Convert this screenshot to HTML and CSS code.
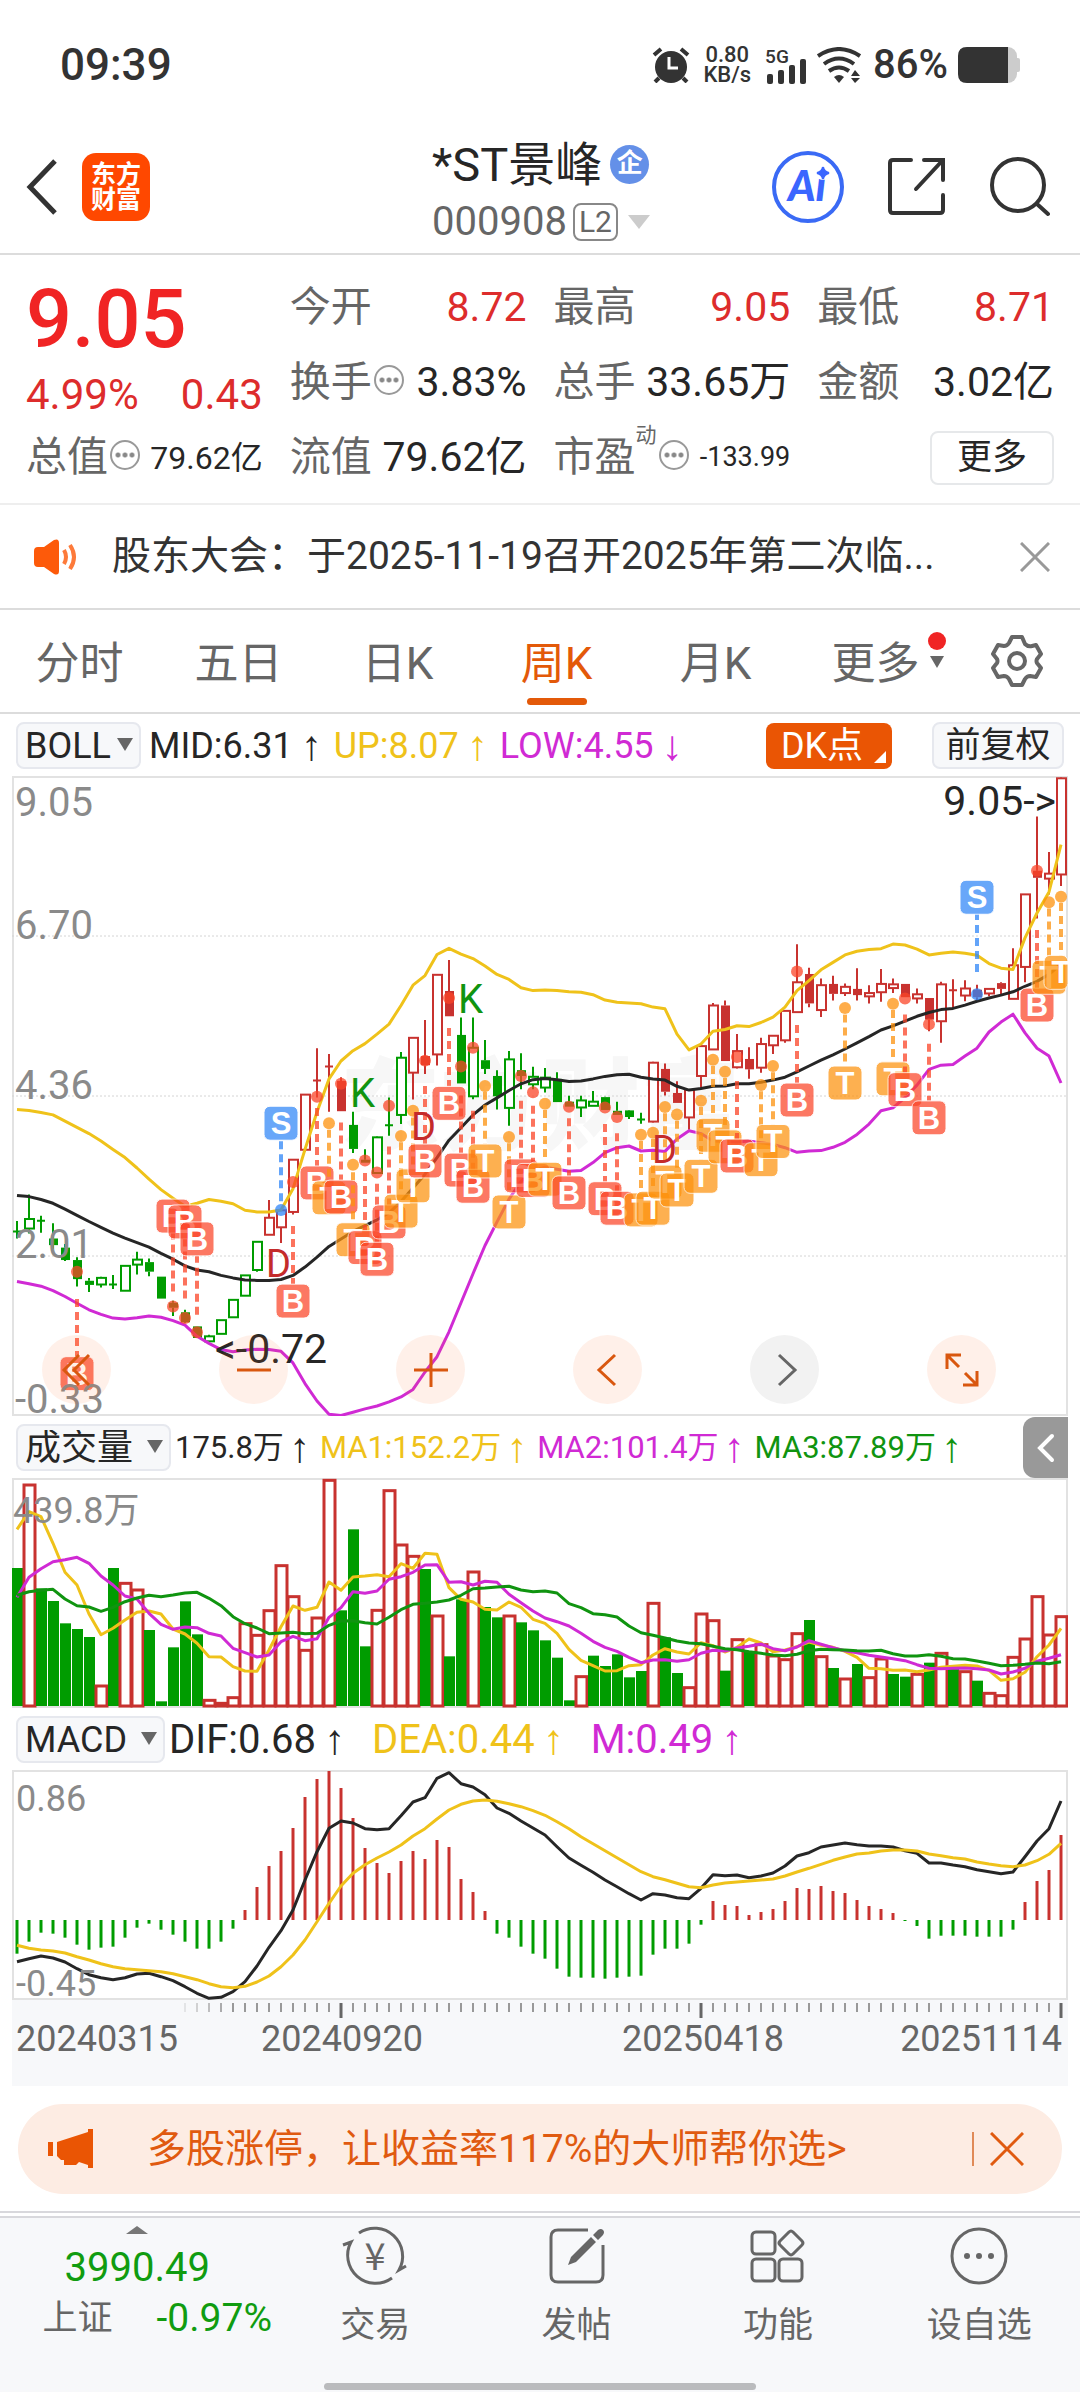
FILE: index.html
```html
<!DOCTYPE html>
<html lang="zh-CN">
<head>
    <meta charset="UTF-8">
    <meta name="viewport" content="width=device-width, initial-scale=1.0">
    <title>*ST景峰 000908</title>
    <link rel="stylesheet" href="styles.css">
</head>
<body>

    <div class="status">
        <span class="clock">09:39</span>
        <svg class="alarm" viewBox="0 0 38 36" width="38" height="36">
            <circle cx="19" cy="20" r="16" fill="#333"/>
            <path d="M2 8 L9 2 M36 8 L29 2 M7 31 L3 35 M31 31 L35 35" stroke="#333" stroke-width="4" fill="none"/>
            <path d="M17 10 V21 H26" stroke="#fff" stroke-width="3" fill="none"/>
        </svg>
        <span class="speed">0.80<br>KB/s</span>
        <span class="signal">
            <span>5G</span>
            <svg viewBox="0 0 42 25" width="42" height="25" fill="#333">
                <rect x="2" y="15" width="6" height="10" rx="2"/>
                <rect x="13" y="11" width="6" height="14" rx="2"/>
                <rect x="24" y="6" width="6" height="19" rx="2"/>
                <rect x="35" y="0" width="6" height="25" rx="2"/>
            </svg>
        </span>
        <svg viewBox="0 0 46 36" width="46" height="36" fill="none" stroke="#333" stroke-width="4">
            <path d="M1 9 Q22 -5 43 9"/>
            <path d="M7 17 Q22 6 37 17"/>
            <path d="M12 24 Q22 17 32 24"/>
            <path d="M17 30 Q22 26 27 30 L22 36 Z" fill="#333" stroke="none"/>
            <path d="M34 29 L38 23 L43 29 Z M34 31 L38 36 L43 31 Z" fill="#333" stroke="none"/>
        </svg>
        <span class="percent">86%</span>
        <svg viewBox="0 0 62 36" width="62" height="36">
            <rect x="0" y="0" width="59" height="36" rx="9" fill="#ccc"/>
            <rect x="57" y="11" width="5" height="14" rx="2" fill="#ccc"/>
            <path d="M9 0 H50 V36 H9 Q0 36 0 27 V9 Q0 0 9 0" fill="#333"/>
        </svg>
    </div>

    <header class="header">
        <div class="header-left">
            <button class="icon-btn" aria-label="返回">
                <svg viewBox="0 0 32 56" width="32" height="56" fill="none" stroke="#333" stroke-width="5">
                    <path d="M29 2 L4 28 L29 54"/>
                </svg>
            </button>
            <a class="logo" href="#">东方<br>财富</a>
        </div>
        <div class="stock">
            <h1>*ST景峰<span class="corp">企</span></h1>
            <button class="code">000908<span class="level">L2</span><span class="tri"></span></button>
        </div>
        <div class="header-right">
            <button class="icon-btn">
                <svg viewBox="0 0 72 72" width="72" height="72">
                    <circle cx="36" cy="36" r="34" fill="#fff" stroke="#3a6af5" stroke-width="4"/>
                    <text class="ai" x="35" y="50">Ai</text>
                    <circle cx="51" cy="22" r="7" fill="#fff"/>
                    <path d="M51 16 Q52 21 57 22 Q52 23 51 28 Q50 23 45 22 Q50 21 51 16" fill="#3a66ff" stroke="#3a66ff" stroke-width="2"/>
                </svg>
            </button>
            <button class="icon-btn" aria-label="分享">
                <svg viewBox="0 0 60 60" width="60" height="60" fill="none" stroke="#333" stroke-width="4" stroke-linecap="round">
                    <path d="M24 3 H6 Q3 3 3 6 V53 Q3 56 6 56 H53 Q56 56 56 53 V38"/>
                    <path d="M37 3 H56 V23 M55 4 L29 32"/>
                </svg>
            </button>
            <button class="icon-btn" aria-label="搜索">
                <svg viewBox="0 0 60 60" width="60" height="60" fill="none" stroke="#333" stroke-width="4" stroke-linecap="round">
                    <circle cx="28" cy="28" r="26"/>
                    <path d="M47 47 L58 57"/>
                </svg>
            </button>
        </div>
    </header>

    <section class="quote">
        <div class="quote-col">
            <div class="price">9.05</div>
            <div class="change"><span>4.99%</span><span>0.43</span></div>
            <div class="cell"><span class="name">总值<i class="tip"></i></span><span class="small">79.62亿</span></div>
        </div>
        <div class="quote-col">
            <div class="cell"><span class="name">今开</span><span class="up">8.72</span></div>
            <div class="cell"><span class="name">换手<i class="tip"></i></span><span>3.83%</span></div>
            <div class="cell"><span class="name">流值</span><span>79.62亿</span></div>
        </div>
        <div class="quote-col">
            <div class="cell"><span class="name">最高</span><span class="up">9.05</span></div>
            <div class="cell"><span class="name">总手</span><span>33.65万</span></div>
            <div class="cell"><span class="name">市盈<sup>动</sup><i class="tip"></i></span><span class="tiny">-133.99</span></div>
        </div>
        <div class="quote-col">
            <div class="cell"><span class="name">最低</span><span class="up">8.71</span></div>
            <div class="cell"><span class="name">金额</span><span>3.02亿</span></div>
            <div class="cell end"><button class="more">更多</button></div>
        </div>
    </section>

    <section class="notice">
        <svg viewBox="0 0 44 36" width="44" height="36">
            <path d="M0 12 Q0 8 4 8 H10 L20 1 Q25 -1 25 4 V32 Q25 37 20 35 L10 28 H4 Q0 28 0 24 Z" fill="#fd5a0a"/>
            <path d="M30 11 Q34 18 30 25 M36 6 Q44 18 36 30" fill="none" stroke="#fd7a3a" stroke-width="4"/>
        </svg>
        <a href="#">股东大会：于2025-11-19召开2025年第二次临...</a>
        <button class="icon-btn" aria-label="关闭">
            <svg viewBox="0 0 30 30" width="30" height="30" stroke="#999" stroke-width="3"><path d="M1 1 L29 29 M29 1 L1 29"/></svg>
        </button>
    </section>

    <nav class="tabs">
        <button>分时</button>
        <button>五日</button>
        <button>日K</button>
        <button class="active">周K</button>
        <button>月K</button>
        <button class="tab-more">更多<span class="flag"><span class="dot"></span><span class="tri"></span></span></button>
        <button class="gear" aria-label="设置">
            <svg viewBox="0 0 52 52" width="52" height="52" fill="none" stroke="#666" stroke-width="4">
                <path d="M21 2 H31 L34 9 Q37 12 41 11 L45 10 L50 19 L46 24 Q45 26 46 28 L50 33 L45 42 L39 41 Q36 41 34 44 L31 50 H21 L18 44 Q16 41 13 41 L7 42 L2 33 L6 28 Q7 26 6 24 L2 19 L7 10 L13 11 Q16 11 18 8 Z" stroke-linejoin="round"/>
                <circle cx="26" cy="26" r="8"/>
            </svg>
        </button>
    </nav>

    <main class="charts">
        <div class="legend">
            <label class="picker tight"><select aria-label="主图指标"><option>BOLL</option></select></label>
            <span class="val">MID:6.31<b>↑</b></span>
            <span class="val yellow">UP:8.07<b>↑</b></span>
            <span class="val purple">LOW:4.55<b>↓</b></span>
            <button class="dk">DK点</button>
            <button class="adjust">前复权</button>
        </div>
        <div class="kline">
            <svg id="kline" class="plot" viewBox="0 0 1056 640"></svg>
            <div class="tools">
                <button aria-label="最早"><svg viewBox="0 0 40 40" width="40" height="40"><path d="M22 5 L7 20 L22 35 M32 5 L17 20 L32 35"/></svg></button>
                <button aria-label="缩小"><svg viewBox="0 0 40 40" width="40" height="40"><path d="M3 20 H37"/></svg></button>
                <button aria-label="放大"><svg viewBox="0 0 40 40" width="40" height="40"><path d="M3 20 H37 M20 3 V37"/></svg></button>
                <button aria-label="左移"><svg viewBox="0 0 40 40" width="40" height="40"><path d="M27 5 L11 20 L27 35"/></svg></button>
                <button class="off" aria-label="右移"><svg viewBox="0 0 40 40" width="40" height="40"><path d="M14 5 L30 20 L14 35"/></svg></button>
                <button aria-label="全屏"><svg viewBox="0 0 40 40" width="40" height="40"><path d="M5 19 V5 H19 M5 5 L17 17 M35 21 V35 H21 M35 35 L23 23"/></svg></button>
            </div>
        </div>

        <div class="legend volume-legend">
            <label class="picker"><select aria-label="副图一"><option>成交量</option></select></label>
            <span class="val">175.8万<b>↑</b></span>
            <span class="val yellow">MA1:152.2万<b>↑</b></span>
            <span class="val purple">MA2:101.4万<b>↑</b></span>
            <span class="val green">MA3:87.89万<b>↑</b></span>
            <button class="side" aria-label="展开">
                <svg viewBox="0 0 20 30" width="20" height="30" fill="none" stroke="#fff" stroke-width="4" stroke-linecap="round"><path d="M16 3 L4 15 L16 27"/></svg>
            </button>
        </div>
        <svg id="volume" class="plot" viewBox="0 0 1056 230"></svg>

        <div class="legend macd-legend">
            <label class="picker"><select aria-label="副图二"><option>MACD</option></select></label>
            <span class="val">DIF:0.68<b>↑</b></span>
            <span class="val yellow">DEA:0.44<b>↑</b></span>
            <span class="val purple">M:0.49<b>↑</b></span>
        </div>
        <svg id="macd" class="plot" viewBox="0 0 1056 230"></svg>
        <svg id="axis" class="plot axis" viewBox="0 0 1056 86"></svg>
    </main>

    <aside class="promo">
        <svg viewBox="0 0 46 40" width="46" height="40" fill="#ea5504">
            <path d="M0 13 H5 V27 H0 Z M9 13 L40 3 V0 H45 V39 H40 V36 L31 33 L28 36 H16 V31 H13 L9 27 Z"/>
        </svg>
        <a href="#">多股涨停，让收益率117%的大师帮你选&gt;</a>
        <button class="icon-btn" aria-label="关闭广告">
            <svg viewBox="0 0 34 34" width="34" height="34" stroke="#e05a10" stroke-width="3"><path d="M1 1 L33 33 M33 1 L1 33"/></svg>
        </button>
    </aside>

    <footer class="bottom">
        <div class="bottom-bar">
            <div class="bottom-row">
                <a class="index" href="#">
                    <span class="tri"></span>
                    <span class="points">3990.49</span>
                    <span class="index-row"><span class="index-name">上证</span><span>-0.97%</span></span>
                </a>
                <a class="item" href="#">
                    <svg viewBox="0 0 66 60" width="66" height="60" fill="none" stroke="#666" stroke-width="3">
                        <path d="M17 7 A28 28 0 0 1 57 44 L64 40 M50 52 A28 28 0 0 1 9 16 L1 19"/>
                        <text class="yen" x="33" y="44">¥</text>
                    </svg>
                    交易
                </a>
                <a class="item" href="#">
                    <svg viewBox="0 0 64 60" width="64" height="60" fill="none" stroke="#666" stroke-width="3">
                        <path d="M43 4 H13 Q6 4 6 11 V49 Q6 56 13 56 H51 Q58 56 58 49 V19"/>
                        <path d="M46 11 L51 16 L31 36 L23 39 L26 31 Z M53 4 Q56 2 58 4 Q60 6 58 9 L53 14 L48 9 Z" fill="#666" stroke="none"/>
                    </svg>
                    发帖
                </a>
                <a class="item" href="#">
                    <svg viewBox="0 0 64 60" width="64" height="60" fill="none" stroke="#666" stroke-width="3">
                        <rect x="6" y="6" width="23" height="22" rx="4"/>
                        <rect x="6" y="33" width="23" height="22" rx="4"/>
                        <rect x="33" y="33" width="23" height="22" rx="4"/>
                        <path d="M43 6 Q45 4 47 6 L56 15 Q58 17 56 19 L47 28 Q45 30 43 28 L34 19 Q32 17 34 15 Z"/>
                    </svg>
                    功能
                </a>
                <a class="item" href="#">
                    <svg viewBox="0 0 64 60" width="64" height="60" fill="none" stroke="#666" stroke-width="3">
                        <circle cx="32" cy="30" r="27"/>
                        <g fill="#666" stroke="none"><circle cx="20" cy="30" r="3"/><circle cx="32" cy="30" r="3"/><circle cx="44" cy="30" r="3"/></g>
                    </svg>
                    设自选
                </a>
            </div>
            <div class="handle"></div>
        </div>
    </footer>

    <script src="chart.js"></script>
</body>
</html>
```
FILE: styles.css
```css
* {
    box-sizing: border-box;
}
body {
    margin: 0;
    background-color: #fff;
    color: #262626;
    font-family: Roboto, "Noto Sans CJK SC", sans-serif;
    font-size: 36px;
    line-height: 1;
}
button, select {
    font: inherit;
    color: inherit;
    background: none;
    border: none;
    margin: 0;
    padding: 0;
}
a {
    color: inherit;
    text-decoration: none;
}
svg {
    display: block;
    flex: none;
}
.icon-btn {
    display: flex;
}
.tri {
    border: 7px solid transparent;
    border-top: 12px solid #666;
    border-bottom: none;
}

/* status bar */
.status {
    display: flex;
    align-items: center;
    gap: 10px;
    height: 112px;
    padding: 18px 60px 0;
    color: #333;
    font-weight: 500;
}
.clock {
    font-size: 44px;
    margin-right: auto;
}
.alarm {
    margin-right: 3px;
}
.speed {
    font-size: 22px;
    line-height: 20px;
    text-align: center;
}
.signal {
    display: flex;
    flex-direction: column;
    font-size: 19px;
    margin-left: 4px;
}
.signal svg {
    margin-top: -7px;
}
.percent {
    font-size: 40px;
}

/* header */
.header {
    display: grid;
    grid-template-columns: 1fr auto 1fr;
    align-items: center;
    height: 143px;
    padding: 8px 30px 0 26px;
    border-bottom: 2px solid #dcdcdc;
}
.header-left, .header-right {
    display: flex;
    align-items: center;
    gap: 24px;
}
.header-right {
    justify-content: flex-end;
    gap: 43px;
}
.logo {
    display: grid;
    place-items: center;
    width: 68px;
    height: 68px;
    border-radius: 14px;
    background-color: #ff4800;
    color: #fff;
    font-size: 25px;
    font-weight: 700;
}
.stock {
    padding: 10px 0 0 6px;
}
.stock h1 {
    display: flex;
    align-items: center;
    gap: 8px;
    margin: 0;
    font-size: 47px;
    font-weight: 400;
    line-height: 60px;
}
.corp {
    width: 39px;
    height: 39px;
    border-radius: 50%;
    background-color: #6490e8;
    color: #fff;
    font-size: 26px;
    font-weight: 700;
    line-height: 37px;
    text-align: center;
}
.code {
    display: flex;
    align-items: center;
    gap: 6px;
    color: #666;
    font-size: 40px;
    line-height: 54px;
}
.level {
    padding: 0 4px;
    border: 2px solid #888;
    border-radius: 8px;
    font-size: 30px;
    line-height: 34px;
}
.code .tri {
    border-width: 14px 11px 0;
    border-top-color: #ccc;
    margin-left: 4px;
}
.ai {
    fill: #3a66ff;
    font-family: Lato, sans-serif;
    font-size: 42px;
    font-style: italic;
    font-weight: 900;
    text-anchor: middle;
}

/* quote */
.quote {
    display: grid;
    grid-template-columns: repeat(4, 1fr);
    gap: 27px;
    padding: 15px 26px 8px;
    border-bottom: 2px solid #eee;
    font-size: 41px;
}
.cell {
    display: flex;
    align-items: center;
    justify-content: space-between;
    height: 75px;
    white-space: nowrap;
}
.cell.end {
    justify-content: flex-end;
}
.name {
    display: flex;
    align-items: center;
    color: #666;
}
.name sup {
    align-self: flex-start;
    font-size: 21px;
    margin-top: -12px;
}
.tip {
    width: 30px;
    height: 30px;
    margin: -6px 0 0 2px;
    border: 2px solid #999;
    border-radius: 50%;
    background: radial-gradient(circle, #888 2px, transparent 3px) center / 7px 26px repeat-x content-box;
    padding: 0 3px;
}
.up, .price, .change {
    color: #dd2c2c;
}
.price {
    color: #f02424;
    font-size: 81px;
    font-weight: 500;
    line-height: 100px;
}
.change {
    display: flex;
    justify-content: space-between;
    font-size: 42px;
    line-height: 50px;
}
.small {
    font-size: 32px;
}
.tiny {
    font-size: 27px;
}
.more {
    width: 124px;
    height: 54px;
    border: 2px solid #e6e8ea;
    border-radius: 8px;
    font-size: 35px;
}

/* notice */
.notice {
    display: flex;
    align-items: center;
    gap: 34px;
    height: 105px;
    padding: 0 30px 0 34px;
    border-bottom: 2px solid #dcdcdc;
    color: #333;
    font-size: 39px;
}
.notice a {
    flex: 1;
    white-space: nowrap;
}

/* period tabs */
.tabs {
    display: grid;
    grid-template-columns: repeat(6, 159fr) 126fr;
    height: 104px;
    border-bottom: 2px solid #dcdcdc;
    color: #666;
    font-size: 44px;
}
.tabs button {
    position: relative;
    padding-top: 6px;
}
.tabs .active {
    color: #e35909;
}
.active::after {
    content: "";
    position: absolute;
    left: 50%;
    bottom: 7px;
    width: 60px;
    height: 7px;
    margin-left: -30px;
    border-radius: 4px;
    background-color: #e35909;
}
.tabs .tab-more {
    display: flex;
    align-items: center;
    justify-content: center;
    padding-left: 28px;
}
.flag {
    display: flex;
    flex-direction: column;
    align-items: center;
    gap: 6px;
    margin: -28px 0 0 8px;
}
.dot {
    width: 18px;
    height: 18px;
    border-radius: 50%;
    background-color: #f02424;
}
.tabs .gear {
    display: grid;
    place-items: center;
    padding-top: 0;
}

/* charts */
.charts {
    padding: 0 12px;
}
.plot {
    width: 100%;
    height: auto;
}
.legend {
    display: flex;
    align-items: center;
    height: 62px;
    padding: 1px 4px 0;
    white-space: nowrap;
}
.picker {
    position: relative;
    margin-right: 4px;
}
.picker select {
    appearance: none;
    height: 47px;
    padding: 0 35px 0 7px;
    border: 2px solid #e6e8ee;
    border-radius: 8px;
    background-color: #f7f8fa;
}
.picker.tight {
    margin-right: 8px;
}
.picker.tight select {
    padding-right: 28px;
}
.picker::after {
    content: "";
    position: absolute;
    right: 8px;
    top: 16px;
    border: 8px solid transparent;
    border-top: 13px solid #666;
    border-bottom: none;
    pointer-events: none;
}
.val {
    display: flex;
    align-items: center;
    margin-right: 12px;
}
.val b {
    margin-left: 8px;
    font-family: "Liberation Sans", sans-serif;
    font-size: 42px;
    font-weight: 400;
}
.yellow {
    color: #efc21a;
}
.purple {
    color: #d02ad4;
}
.green {
    color: #109410;
}
.dk {
    position: relative;
    width: 126px;
    height: 46px;
    margin-left: auto;
    padding-right: 14px;
    border-radius: 8px;
    background-color: #ea5504;
    color: #fff;
}
.dk::after {
    content: "";
    position: absolute;
    right: 6px;
    bottom: 6px;
    border-left: 12px solid transparent;
    border-bottom: 12px solid #fff;
}
.adjust {
    width: 132px;
    height: 47px;
    margin-left: 40px;
    border: 2px solid #e6e8ee;
    border-radius: 8px;
    background-color: #f7f8fa;
    font-size: 35px;
}
.volume-legend {
    padding-right: 0;
}
.volume-legend .val {
    margin-right: 10px;
    font-size: 31px;
}
.volume-legend b {
    margin-left: 5px;
}
.side {
    display: grid;
    place-items: center;
    width: 45px;
    height: 61px;
    margin-left: auto;
    border-radius: 12px 0 0 12px;
    background-color: #999;
}
.macd-legend .val {
    margin-right: 27px;
    font-size: 40px;
}
.kline {
    position: relative;
}
.tools {
    position: absolute;
    left: 0;
    right: 0;
    bottom: 12px;
    display: flex;
    justify-content: space-between;
    padding: 0 72px 0 30px;
}
.tools button {
    display: grid;
    place-items: center;
    width: 69px;
    height: 69px;
    border-radius: 50%;
    background-color: rgba(253, 110, 40, 0.1);
}
.tools path {
    fill: none;
    stroke: #d9570f;
    stroke-width: 3;
}
.tools .off {
    background-color: #f2f2f2;
}
.tools .off path {
    stroke: #666;
}

/* svg parts */
.frame {
    fill: none;
    stroke: #e2e2e2;
    stroke-width: 2;
}
.grid {
    stroke: #d4d4d4;
    stroke-width: 1;
    stroke-dasharray: 2 2;
}
.watermark {
    fill: #f7f7f7;
    font-size: 100px;
    font-weight: 900;
}
.scale {
    fill: #8a8a8a;
    font-size: 40px;
}
.scale-s {
    fill: #8a8a8a;
    font-size: 36px;
}
.mark {
    fill: #262626;
    font-size: 41px;
}
.point-k {
    fill: #109410;
    font-size: 40px;
}
.point-d {
    fill: #c42b2b;
    font-size: 38px;
}
.badge text {
    fill: #fff;
    font-family: "Liberation Sans", sans-serif;
    font-size: 31px;
    font-weight: 700;
    text-anchor: middle;
}
.badge rect {
    stroke: #fff;
    stroke-width: 1;
    opacity: 0.72;
}
.stem {
    stroke-width: 4;
    stroke-dasharray: 8 5;
    opacity: 0.75;
}
.curve {
    fill: none;
    stroke-width: 3;
    stroke-linejoin: round;
}
.axis {
    background-color: #f7f8fa;
}
.date {
    fill: #666;
    font-size: 36px;
}

/* promo */
.promo {
    display: flex;
    align-items: center;
    height: 90px;
    margin: 18px 18px 17px;
    padding: 0 38px 0 30px;
    border-radius: 45px;
    background-color: #fdece3;
    color: #e05a10;
    font-size: 39px;
}
.promo a {
    flex: 1;
    margin-left: 53px;
    white-space: nowrap;
}
.promo .icon-btn {
    padding-left: 16px;
    border-left: 2px solid #e08a58;
}

/* bottom bar */
.bottom {
    padding-top: 3px;
    border-top: 2px solid #d8d8dc;
    color: #666;
}
.bottom-bar {
    padding-bottom: 3px;
    border-top: 2px solid #d8d8dc;
    background-color: #f7f8fa;
}
.bottom-row {
    display: flex;
    height: 165px;
}
.index {
    display: flex;
    flex-direction: column;
    align-items: center;
    flex: 274;
    padding-top: 8px;
    color: #109c10;
}
.index .tri {
    border: 11px solid transparent;
    border-top: none;
    border-bottom: 8px solid #777;
}
.points {
    margin-top: 14px;
    font-size: 40px;
}
.index-row {
    display: flex;
    align-items: center;
    gap: 44px;
    margin-top: 11px;
    padding-left: 40px;
    font-size: 39px;
}
.index-name {
    color: #666;
    font-size: 35px;
}
.item {
    display: flex;
    flex-direction: column;
    align-items: center;
    gap: 22px;
    flex: 201;
    padding-top: 8px;
    font-size: 35px;
}
.yen {
    fill: #666;
    stroke: none;
    font-family: "Noto Sans CJK SC", sans-serif;
    font-size: 38px;
    text-anchor: middle;
}
.handle {
    width: 40%;
    height: 7px;
    margin: 0 auto;
    border-radius: 4px;
    background-color: #babbbd;
}
```
FILE: chart.js
```js
const RED = '#c8322f';
const GREEN = '#009c00';
const COLORS = { B: '#fb4528', T: '#fd920e', S: '#2f86f8' };
const STEP = 12;
const x = i => 5 + i * STEP;

function curve(data, y, color) {
    const pts = data.map((v, i) => `${x(i)},${y(v).toFixed(1)}`).join(' ');
    return `<polyline class="curve" points="${pts}" stroke="${color}"/>`;
}

function frame(h) {
    return `<rect class="frame" x="1" y="1" width="1054" height="${h - 2}"/>`;
}

// ---- weekly candles: kind, high, body top, body bottom, low ----
// R / G hollow, r / g filled, x / y cross (red / green)
const candles = [
    ['y',1088,1113,1113,1130], ['G',1024,1083,1106,1118], ['y',1075,1087,1087,1116], ['g',1093,1130,1146,1155],
    ['g',1143,1152,1182,1184], ['g',1175,1182,1228,1246], ['g',1225,1232,1242,1259], ['G',1222,1225,1241,1248],
    ['y',1218,1241,1241,1252], ['G',1195,1196,1256,1256], ['G',1162,1181,1193,1217], ['g',1178,1187,1210,1221],
    ['g',1222,1222,1275,1275], ['g',1280,1285,1297,1317], ['g',1302,1308,1332,1334], ['g',1342,1342,1370,1370],
    ['G',1362,1366,1378,1378], ['G',1327,1327,1360,1360], ['G',1278,1278,1320,1320], ['G',1219,1219,1268,1268],
    ['G',1138,1138,1206,1210], ['R',1037,1080,1121,1121], ['R',1062,1062,1103,1141], ['R',938,940,1066,1072],
    ['R',783,783,916,920], ['x',671,749,749,790], ['x',685,715,715,824], ['r',741,750,823,823],
    ['g',824,856,914,924], ['g',915,940,945,945], ['G',884,886,972,972], ['y',790,857,857,882],
    ['G',680,694,832,854], ['R',645,646,730,795], ['r',603,690,712,733], ['R',492,494,686,713],
    ['r',458,533,594,594], ['g',597,639,756,756], ['G',597,670,787,794], ['g',651,700,721,733],
    ['g',724,738,787,819], ['G',678,698,815,858], ['g',683,724,738,770], ['G',716,740,758,770],
    ['G',719,742,766,778], ['g',729,745,801,801], ['g',786,800,812,812], ['G',786,797,814,837],
    ['G',774,800,810,810], ['g',788,789,820,820], ['g',800,822,832,832], ['g',820,821,837,842],
    ['y',827,843,843,853], ['R',704,706,848,850], ['r',708,721,776,785], ['r',751,779,803,803],
    ['R',770,772,838,868], ['R',664,666,738,768], ['R',562,568,674,674], ['r',556,568,702,702],
    ['R',637,678,717,720], ['r',669,697,722,745], ['R',646,661,718,730], ['R',640,641,664,685],
    ['R',579,581,652,658], ['R',420,512,584,584], ['r',477,492,563,572], ['R',503,519,579,596],
    ['r',496,516,540,556], ['R',515,523,538,545], ['r',478,528,543,556], ['R',519,538,546,563],
    ['R',480,516,536,559], ['R',503,517,526,538], ['r',516,516,548,548], ['R',527,541,551,563],
    ['r',550,550,602,630], ['R',511,517,606,658], ['x',505,531,531,575], ['R',507,527,544,558],
    ['r',518,530,548,556], ['R',528,528,539,546], ['r',512,514,528,540], ['R',430,471,552,552],
    ['R',299,300,475,512], ['r',112,243,260,358], ['R',198,250,262,300], ['R',18,20,252,280]
];

const up = [819,821,826,832,847,862,877,895,915,935,960,987,1012,1033,1052,1045,1036,1040,1046,1062,1066,1066,1061,1010,915,825,745,702,677,660,637,613,568,519,496,445,430,444,455,473,493,505,525,532,531,532,535,536,542,555,560,562,564,572,576,637,675,661,630,626,617,619,609,596,572,532,508,482,464,446,437,433,431,420,422,432,446,442,439,442,447,467,478,481,405,345,294,180];
const mid = [1026,1029,1036,1045,1059,1074,1089,1103,1117,1129,1140,1151,1166,1180,1196,1206,1210,1219,1225,1230,1231,1231,1229,1219,1199,1175,1149,1131,1113,1099,1085,1068,1041,1008,975,935,893,863,832,808,791,773,757,747,744,747,751,750,745,739,735,734,741,745,748,763,772,768,763,762,757,757,753,748,741,728,714,700,687,673,658,643,627,617,606,594,585,578,575,567,558,550,543,535,522,510,493,468];
const low = [1234,1239,1245,1256,1270,1286,1302,1313,1322,1324,1321,1317,1320,1328,1339,1366,1383,1398,1403,1399,1397,1398,1402,1430,1480,1522,1554,1557,1549,1541,1534,1524,1512,1494,1452,1415,1355,1285,1215,1147,1090,1035,992,965,958,963,968,966,947,923,911,907,919,917,920,890,870,877,895,896,897,895,899,903,911,922,919,918,910,898,879,854,822,815,790,760,722,712,710,690,671,632,608,589,634,671,690,755];

// signal: kind, week, dot, badge centre, stem start
const signals = [
    ['B',5,1210,1456,1276], ['B',13,1294,1076,1258], ['B',14,1322,1090,1275], ['B',15,1356,1131,1314],
    ['S',22,1061,852,1040], ['B',23,994,1281,1100], ['B',25,788,996,815], ['T',26,852,1032,868],
    ['B',27,757,1030,850], ['T',28,952,1133,970], ['B',29,942,1152,972], ['B',30,971,1180,998],
    ['B',31,810,1090,908], ['T',32,883,1064,898], ['T',33,822,1003,838], ['B',34,701,943,762],
    ['B',36,550,804,622], ['B',37,715,965,785], ['B',38,670,1004,822], ['T',39,762,943,776],
    ['T',41,885,1066,900], ['B',42,738,979,798], ['B',43,777,990,810], ['T',44,805,987,820],
    ['B',46,812,1020,840], ['B',49,814,1034,854], ['B',50,837,1057,876], ['T',52,880,1061,895],
    ['T',53,875,1057,890], ['T',54,813,994,828], ['T',55,831,1013,846], ['T',57,798,980,813],
    ['T',58,699,881,714], ['T',59,728,909,743], ['B',60,692,931,750], ['T',62,760,940,775],
    ['T',63,714,896,729], ['B',65,486,796,615], ['T',69,574,755,590], ['T',73,564,745,579],
    ['B',74,551,771,590], ['B',76,613,839,660], ['S',80,541,307,487], ['B',85,243,567,386],
    ['T',86,319,500,334], ['T',87,306,488,321]
];

function drawKline() {
    const y = v => v / 2.412 - 6;
    let s = `<text class="watermark" x="328" y="366">东方财富</text>` + frame(640);
    [160, 320, 480].forEach(g => {
        s += `<line class="grid" x1="0" x2="1056" y1="${g}" y2="${g}"/>`;
    });
    candles.forEach(([kind, hi, top, bottom, lo], i) => {
        const c = 'Rrx'.includes(kind) ? RED : GREEN;
        const cx = x(i);
        if (kind === 'x' || kind === 'y') {
            s += `<path d="M${cx} ${y(hi)} V${y(lo)} M${cx - 4} ${y(top)} H${cx + 4}" stroke="${c}" stroke-width="2"/>`;
            return;
        }
        s += `<path d="M${cx} ${y(hi)} V${y(top)} M${cx} ${y(bottom)} V${y(lo)}" stroke="${c}" stroke-width="2"/>`;
        const hollow = kind === 'R' || kind === 'G';
        const h = Math.max(y(bottom) - y(top), 3);
        s += `<rect x="${cx - 4}" y="${y(top)}" width="9" height="${h}" fill="${hollow ? '#fff' : c}" stroke="${c}" stroke-width="${hollow ? 2 : 0}"/>`;
    });
    s += curve(up, y, '#efc21a') + curve(mid, y, '#262626') + curve(low, y, '#d02ad4');
    signals.forEach(([kind, i, dot, badge, stem]) => {
        const c = COLORS[kind];
        const cx = x(i);
        const by = y(badge);
        const edge = by + (badge > dot ? -17 : 17);
        // the last badge is cut off by the plot edge
        const left = cx - 17;
        const w = Math.min(34, 1056 - left);
        s += `<line class="stem" x1="${cx}" x2="${cx}" y1="${y(stem)}" y2="${edge}" stroke="${c}"/>`;
        s += `<circle cx="${cx}" cy="${y(dot)}" r="6" fill="${c}" opacity="0.75"/>`;
        s += `<g class="badge"><rect x="${left}" y="${by - 17}" width="${w}" height="34" rx="6" fill="${c}"/><text x="${cx}" y="${by + 11}">${kind}</text></g>`;
    });
    s += `<text class="point-k" x="338" y="331">K</text><text class="point-k" x="446" y="237">K</text>`;
    s += `<text class="point-d" x="254" y="501">D</text><text class="point-d" x="399" y="364">D</text><text class="point-d" x="640" y="387">D</text>`;
    s += `<text class="scale" x="3" y="40">9.05</text><text class="scale" x="3" y="163">6.70</text>`;
    s += `<text class="scale" x="3" y="323">4.36</text><text class="scale" x="3" y="482">2.01</text><text class="scale" x="3" y="637">-0.33</text>`;
    s += `<text class="mark" x="203" y="587">&lt;-0.72</text><text class="mark" x="1044" y="39" text-anchor="end">9.05-&gt;</text>`;
    document.getElementById('kline').innerHTML = s;
}

// ---- volume ----
const volume = 'G474 R222 G535 G573 G640 G657 G681 R825 G474 R517 R537 G660 G874 G712 G574 G673 R868 R877 R860 R638 R673 R599 R464 R557 R718 R621 R208 G601 G358 G709 R598 R239 R402 R436 G477 R615 G739 G568 R483 G591 G622 R615 G637 G661 G691 G743 G871 R797 G737 G768 G733 G802 G783 R577 G682 G789 R830 R609 R629 G782 R686 G724 R701 R735 R746 R668 G630 R737 G774 R804 G762 R800 R744 G792 G800 R790 G758 R727 G775 R782 G812 R847 R854 R739 R684 R557 R672 R617'.split(' ');
const ma1 = [358,305,320,400,487,525,612,674,655,630,607,603,612,657,672,700,740,741,770,783,784,720,650,588,601,592,516,541,501,498,494,500,461,475,430,433,533,568,576,598,600,576,592,628,640,670,718,751,767,783,782,767,764,735,716,726,732,698,707,726,712,687,699,725,720,710,696,706,712,724,742,775,776,781,780,785,780,772,769,766,768,781,811,806,787,740,705,655];
const ma2 = [562,502,476,455,449,442,460,498,525,558,567,610,643,658,651,653,670,678,715,728,741,735,695,679,692,686,622,593,545,550,543,508,500,487,465,464,517,515,525,514,517,553,578,603,624,635,648,670,694,712,724,742,758,750,749,754,749,730,721,723,714,709,702,716,722,711,692,703,713,722,728,736,741,746,752,764,775,776,775,774,776,780,792,786,775,754,745,734];
const ma3 = [556,545,541,538,567,587,591,604,592,575,564,556,560,555,549,547,565,587,620,641,654,671,669,667,671,670,646,633,632,638,642,622,599,583,580,576,570,556,536,534,531,529,540,545,543,549,581,593,611,614,621,648,668,676,684,693,699,701,709,716,719,725,730,735,737,733,722,718,719,720,722,723,721,731,738,738,734,739,746,747,753,760,767,766,763,759,761,755];

function drawVolume() {
    const y = v => v / 3 - 68;
    const base = 228;
    let s = frame(230);
    volume.forEach((v, i) => {
        const top = y(Number(v.slice(1)));
        if (v[0] === 'G') {
            s += `<rect x="${x(i) - 5}" y="${top}" width="11" height="${base - top}" fill="${GREEN}"/>`;
        } else {
            s += `<rect x="${x(i) - 5}" y="${top + 1}" width="11" height="${base - top - 1}" fill="#fff" stroke="${RED}" stroke-width="3"/>`;
        }
    });
    s += curve(ma1, y, '#efc21a') + curve(ma2, y, '#d02ad4') + curve(ma3, y, '#109410');
    s += `<text class="scale-s" x="1" y="45">439.8万</text>`;
    document.getElementById('volume').innerHTML = s;
}

// ---- macd ----
const bars = [731,695,668,671,683,704,719,713,710,683,653,641,659,674,695,716,716,695,656,600,531,468,423,354,261,207,183,234,324,414,459,489,453,423,447,390,411,507,546,603,671,683,710,731,746,776,800,803,803,806,803,800,797,734,716,716,701,644,573,585,588,615,606,597,573,534,537,528,543,549,570,588,597,609,633,648,686,677,677,677,680,680,680,659,576,513,480,375];
const dif = [755,746,738,744,756,776,794,803,809,803,792,790,800,812,830,850,865,862,845,815,768,712,662,600,510,425,355,333,339,356,359,356,317,276,263,205,188,221,231,254,294,310,333,354,375,410,444,466,487,510,530,551,570,551,555,563,566,535,494,497,495,503,498,489,468,438,428,411,405,399,404,408,408,411,422,430,459,459,465,470,479,485,491,486,440,393,356,273];
const dea = [706,715,720,723,729,740,750,761,770,776,779,782,785,791,800,809,821,830,833,829,816,798,770,735,690,635,580,528,490,464,444,426,405,378,356,327,300,283,273,270,274,281,290,302,316,335,356,380,401,422,443,464,485,500,509,520,530,533,525,519,516,513,510,507,498,486,475,463,451,441,432,429,423,420,420,423,432,437,443,447,456,462,467,470,465,452,433,400];

function drawMacd() {
    const y = v => v / 3 - 60;
    const zero = 150;
    let s = frame(230);
    bars.forEach((v, i) => {
        s += `<path d="M${x(i)} ${zero} V${y(v)}" stroke="${v < 630 ? RED : GREEN}" stroke-width="3"/>`;
    });
    s += curve(dif, y, '#262626') + curve(dea, y, '#efc21a');
    s += `<text class="scale-s" x="4" y="41">0.86</text><text class="scale-s" x="4" y="226">-0.45</text>`;
    document.getElementById('macd').innerHTML = s;
}

function drawAxis() {
    let s = '';
    for (let i = 14; i < 88; i++) {
        const major = i % 30 === 27;
        s += `<path d="M${x(i)} 3 V${major ? 18 : 12}" stroke="${major ? '#666' : '#999'}" stroke-width="${major ? 3 : 2}" opacity="${Math.min(1, (i - 13) / 5)}"/>`;
    }
    s += `<text class="date" x="4" y="51">20240315</text>`;
    s += `<text class="date" x="330" y="51" text-anchor="middle">20240920</text>`;
    s += `<text class="date" x="691" y="51" text-anchor="middle">20250418</text>`;
    s += `<text class="date" x="1050" y="51" text-anchor="end">20251114</text>`;
    document.getElementById('axis').innerHTML = s;
}

drawKline();
drawVolume();
drawMacd();
drawAxis();
```
